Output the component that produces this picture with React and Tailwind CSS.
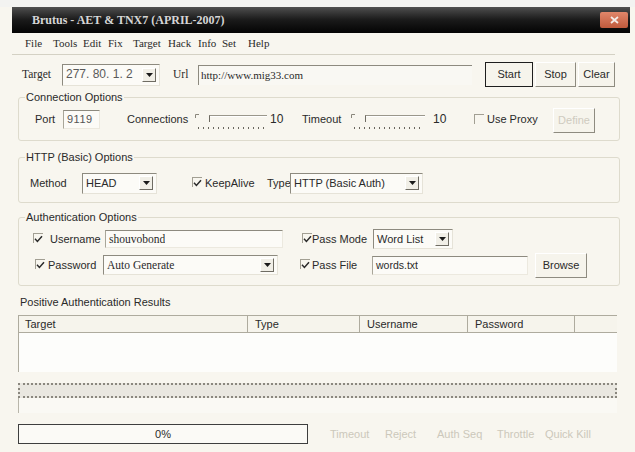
import React from "react";

const SANS = "font-['Liberation_Sans',Arial,sans-serif]";
const SERIF = "font-['Liberation_Serif','Times_New_Roman',serif]";

function Check({ checked = true }) {
  return (
    <span className="shrink-0 inline-flex w-[10px] h-[10px] border-t border-l border-[#a29f93] items-center justify-center">
      {checked && (
        <svg width="9" height="8" viewBox="0 0 9 8">
          <path d="M1 3.8 L3.4 6.4 L8 1.2" fill="none" stroke="#2a2a2a" strokeWidth="1.5" />
        </svg>
      )}
    </span>
  );
}

function Arrow() {
  return (
    <span className="shrink-0 w-[14px] h-[14px] border border-t-[#ffffff] border-l-[#ffffff] border-r-[#6f6c63] border-b-[#6f6c63] bg-[#f1efe7] flex items-center justify-center">
      <svg width="7" height="4" viewBox="0 0 7 4">
        <path d="M0 0h7L3.5 4z" fill="#1a1a1a" />
      </svg>
    </span>
  );
}

function Combo({ w, h = "h-[21px]", text, textClass = "" }) {
  return (
    <div className={`${w} ${h} shrink-0 flex items-center border border-t-[#8d8a7f] border-l-[#8d8a7f] border-r-[#e6e3d8] border-b-[#e6e3d8] bg-[#fcfbf7] pr-[3px]`}>
      <span className={`flex-1 pl-[3px] truncate ${textClass}`}>{text}</span>
      <Arrow />
    </div>
  );
}

function Field({ w, h = "h-[19px]", text, textClass = "" }) {
  return (
    <div className={`${w} ${h} shrink-0 flex items-center border border-t-[#8d8a7f] border-l-[#a9a699] border-r-[#ece9df] border-b-[#ece9df] bg-[#fcfbf7]`}>
      <span className={`pl-[3px] truncate ${textClass}`}>{text}</span>
    </div>
  );
}

function Button({ w, children, strong = false, disabled = false }) {
  return (
    <div
      className={`${w} h-[25px] shrink-0 flex items-center justify-center ${
        strong ? "border border-[#1e1e1e]" : "border border-t-[#ffffff] border-l-[#ffffff] border-r-[#8e8b80] border-b-[#8e8b80]"
      } bg-[#f6f4ec] text-[11px] ${disabled ? "text-[#cfcbbf]" : "text-[#2a2a2a]"}`}
    >
      {children}
    </div>
  );
}

function Slider({ w, vw }) {
  const dots = [];
  for (let x = 3; x <= vw - 2; x += 5) dots.push(x);
  return (
    <svg className={`${w} h-[24px] shrink-0`} viewBox={`0 0 ${vw} 24`}>
      <path d="M0.5 11 V7.5 H4" fill="none" stroke="#8a877c" strokeWidth="1" />
      <path d="M14.5 8 V15" stroke="#6f6c63" strokeWidth="1" />
      <path d={`M14.5 8.5 H${vw}`} stroke="#9a978b" strokeWidth="1" />
      <path d={`M15 9.5 H${vw}`} stroke="#ffffff" strokeWidth="1" />
      {dots.map((x) => (
        <rect key={x} x={x} y="20" width="1" height="2" fill="#6a675e" />
      ))}
    </svg>
  );
}

export default function App() {
  const menu = [
    ["File", "w-[28px]"],
    ["Tools", "w-[30px]"],
    ["Edit", "w-[25px]"],
    ["Fix", "w-[25px]"],
    ["Target", "w-[35px]"],
    ["Hack", "w-[30px]"],
    ["Info", "w-[24px]"],
    ["Set", "w-[26px]"],
    ["Help", "w-[30px]"],
  ];

  return (
    <div className={`w-[635px] h-[452px] bg-[#f8f6ef] overflow-hidden text-[#2a2a2a] text-[11px] leading-[13px] ${SANS}`}>
      {/* window caption */}
      <div className="h-[7px] bg-[#f3f3f1]" />
      <div className="ml-[12px] w-[618px] h-[26px] bg-gradient-to-b from-[#505050] via-[#1a1a1a] to-[#050505] flex items-center">
        <span className={`ml-[20px] text-[12px] font-bold text-[#d6d6d6] ${SERIF}`}>
          Brutus - AET &amp; TNX7 (APRIL-2007)
        </span>
        <span className="ml-auto mr-[2px] w-[28px] h-[16px] rounded-[2px] bg-gradient-to-b from-[#e0866a] to-[#c05a3c] flex items-center justify-center">
          <svg width="9" height="8" viewBox="0 0 9 8">
            <path d="M1 1 L8 7 M8 1 L1 7" stroke="#f4ece8" strokeWidth="1.8" />
          </svg>
        </span>
      </div>

      {/* menu bar */}
      <div className={`ml-[12px] w-[603px] h-[22px] pl-[13px] flex items-center border-b border-[#d4d1c4] ${SERIF}`}>
        {menu.map(([m, w]) => (
          <span key={m} className={`${w} shrink-0 text-[11px]`}>{m}</span>
        ))}
      </div>

      {/* target / url row */}
      <div className="mt-[7px] h-[25px] flex items-center">
        <span className={`ml-[22px] w-[40px] shrink-0 text-[11.5px] ${SERIF}`}>Target</span>
        <Combo w="w-[98px]" h="h-[22px]" text="277. 80. 1. 2" textClass="text-[12px] text-[#5a5a5a]" />
        <span className={`ml-[13px] w-[25px] shrink-0 text-[11.5px] ${SERIF}`}>Url</span>
        <div className="w-[274px] h-[20px] shrink-0 flex items-center border-t border-l border-[#8d8a7f] bg-[#f9f8f3]">
          <span className={`pl-[2px] text-[11px] ${SERIF}`}>http://www.mig33.com</span>
        </div>
        <div className="ml-[13px]">
          <Button w="w-[48px]" strong>Start</Button>
        </div>
        <div className="ml-[2px]">
          <Button w="w-[41px]">Stop</Button>
        </div>
        <div className="ml-[2px]">
          <Button w="w-[37px]">Clear</Button>
        </div>
      </div>

      {/* connection options */}
      <fieldset className="mt-[4px] ml-[18px] w-[602px] border border-[#dedbcd] rounded-[3px] pb-[6px]">
        <legend className="ml-[6px] px-[1px] leading-[13px]">Connection Options</legend>
        <div className="h-[30px] flex items-center">
          <span className="ml-[16px] w-[28px] shrink-0">Port</span>
          <Field w="w-[37px]" text="9119" textClass="text-[11px] text-[#555] tracking-[0.5px]" />
          <span className="ml-[27px] w-[68px] shrink-0">Connections</span>
          <Slider w="w-[72px]" vw={72} />
          <span className="ml-[3px] w-[32px] shrink-0 text-[12px]">10</span>
          <span className="w-[49px] shrink-0">Timeout</span>
          <Slider w="w-[74px]" vw={74} />
          <span className="ml-[8px] w-[41px] shrink-0 text-[12px]">10</span>
          <Check checked={false} />
          <span className="ml-[3px] w-[66px] shrink-0">Use Proxy</span>
          <div className="mt-[2px]">
            <Button w="w-[42px]" disabled>Define</Button>
          </div>
        </div>
      </fieldset>

      {/* http options */}
      <fieldset className="mt-[10px] ml-[18px] w-[602px] border border-[#dedbcd] rounded-[3px] pt-[7px] pb-[7px]">
        <legend className="ml-[6px] px-[1px] leading-[13px]">HTTP (Basic) Options</legend>
        <div className="h-[24px] flex items-center">
          <span className="ml-[11px] w-[52px] shrink-0">Method</span>
          <Combo w="w-[75px]" text="HEAD" />
          <span className="ml-[35px]"><Check /></span>
          <span className="ml-[3px] w-[62px] shrink-0">KeepAlive</span>
          <span className="w-[23px] shrink-0">Type</span>
          <Combo w="w-[133px]" text="HTTP (Basic Auth)" />
        </div>
      </fieldset>

      {/* authentication options */}
      <fieldset className="mt-[8px] ml-[18px] w-[602px] border border-[#dedbcd] rounded-[3px] pb-[8px]">
        <legend className="ml-[6px] px-[1px] leading-[13px]">Authentication Options</legend>
        <div className="mt-[4px] h-[22px] flex items-center">
          <span className="ml-[14px]"><Check /></span>
          <span className="ml-[7px] w-[55px] shrink-0">Username</span>
          <Field w="w-[178px]" h="h-[18px]" text="shouvobond" textClass={`text-[11.5px] ${SERIF}`} />
          <span className="ml-[19px]"><Check /></span>
          <span className="w-[61px] shrink-0">Pass Mode</span>
          <Combo w="w-[80px]" h="h-[20px]" text="Word List" />
        </div>
        <div className="mt-[3px] h-[24px] flex items-center">
          <span className="ml-[16px]"><Check /></span>
          <span className="ml-[3px] w-[55px] shrink-0">Password</span>
          <Combo w="w-[175px]" h="h-[20px]" text="Auto Generate" textClass={`text-[11.5px] ${SERIF}`} />
          <span className="ml-[22px]"><Check /></span>
          <span className="ml-[2px] w-[60px] shrink-0">Pass File</span>
          <Field w="w-[156px]" text="words.txt" textClass="text-[10.5px]" />
          <div className="ml-[7px]">
            <Button w="w-[52px]">Browse</Button>
          </div>
        </div>
      </fieldset>

      {/* results */}
      <div className="mt-[10px] ml-[20px]">Positive Authentication Results</div>
      <div className="mt-[6px] ml-[18px] w-[599px]">
        <div className="h-[18px] flex border-t border-b border-[#aeab9e] bg-[#f6f4ec]">
          <div className="w-[230px] shrink-0 pl-[6px] flex items-center border-l border-r border-[#aeab9e]">Target</div>
          <div className="w-[112px] shrink-0 pl-[7px] flex items-center border-r border-[#aeab9e]">Type</div>
          <div className="w-[108px] shrink-0 pl-[7px] flex items-center border-r border-[#aeab9e]">Username</div>
          <div className="w-[107px] shrink-0 pl-[7px] flex items-center border-r border-[#aeab9e]">Password</div>
          <div className="flex-1" />
        </div>
        <div className="h-[39px] bg-[#fdfdfb] border-l border-[#aeab9e]" />
      </div>

      {/* marquee strip */}
      <div className="mt-[11px] ml-[18px] w-[599px] h-[15px] border-2 border-dotted border-[#8a877e] bg-[#e9e7e0]" />
      <div className="ml-[18px] w-[599px] h-[15px] border-l border-[#b9b6aa] bg-[#faf9f4]" />

      {/* progress + actions */}
      <div className="mt-[11px] flex items-center">
        <div className="ml-[18px] w-[290px] h-[20px] shrink-0 border border-[#3e3e3e] bg-[#fbfaf6] flex items-center justify-center">
          0%
        </div>
        <div className="ml-[22px] flex text-[#ccc8bb]">
          <span className="w-[55px] shrink-0">Timeout</span>
          <span className="w-[52px] shrink-0">Reject</span>
          <span className="w-[60px] shrink-0">Auth Seq</span>
          <span className="w-[48px] shrink-0">Throttle</span>
          <span className="shrink-0">Quick Kill</span>
        </div>
      </div>
    </div>
  );
}
